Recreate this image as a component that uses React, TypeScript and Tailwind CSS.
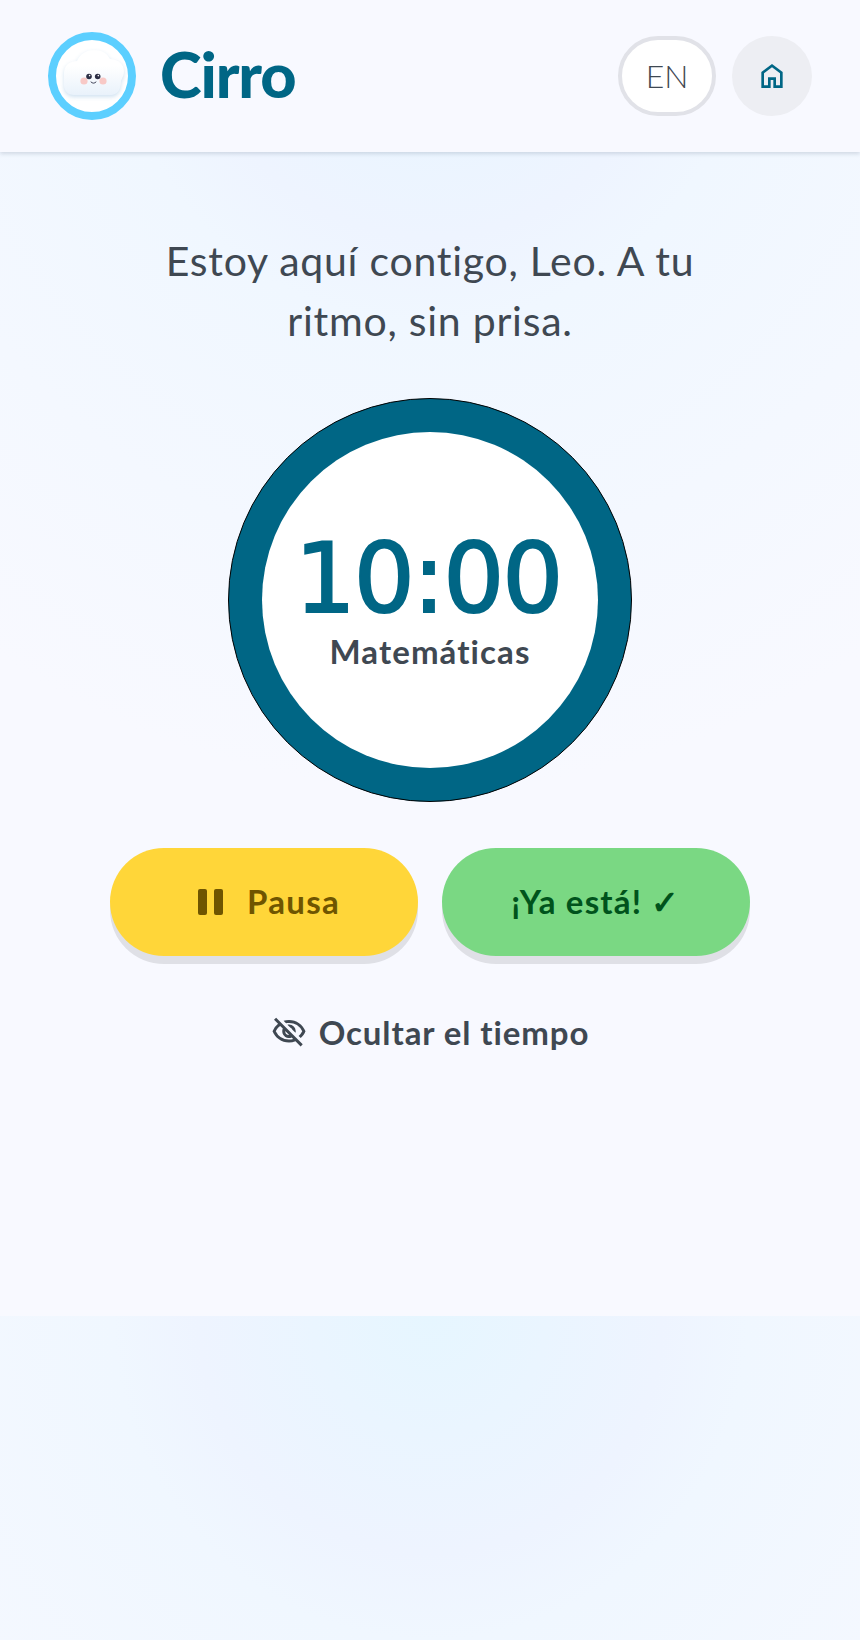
import { MdOutlineVisibilityOff } from 'react-icons/md'

// Small mascot in the header badge
function CloudLogo() {
  return (
    <div className="flex h-[88px] w-[88px] shrink-0 items-center justify-center rounded-full border-8 border-[#5ccfff] bg-white">
      <svg width="66" height="52" viewBox="-1 0 66 52" className="shrink-0 drop-shadow-[0_2px_2px_rgba(150,190,225,0.45)]">
        <defs>
          <linearGradient id="cloudFill" x1="0" y1="0" x2="0" y2="1">
            <stop offset="0.35" stopColor="#ffffff" />
            <stop offset="1" stopColor="#e9f2fb" />
          </linearGradient>
        </defs>
        <path
          d="M14 45C8 45 4 41 4 35V23C4 15 10 11 17 11C20 4 26 0 34 0C42 0 47 3 50 9C58 9 64 14 64 21C64 26 62 28 61 31C61 40 57 45 51 45Z"
          fill="url(#cloudFill)"
        />
        <circle cx="24" cy="31" r="3.6" fill="#f8c9c6" />
        <circle cx="43" cy="31" r="3.6" fill="#f8c9c6" />
        <circle cx="29" cy="26.500" r="2.8" fill="#2c2f45" />
        <circle cx="37.700" cy="26.500" r="2.8" fill="#2c2f45" />
        <circle cx="29.600" cy="25.600" r="0.8" fill="#fff" />
        <circle cx="38.300" cy="25.600" r="0.8" fill="#fff" />
        <path d="M31 32c1.500 1.600 3.500 1.600 5 0" fill="none" stroke="#2c2f45" strokeWidth="0.9" strokeLinecap="round" />
      </svg>
    </div>
  )
}

function HomeIcon() {
  return (
    <svg width="32" height="32" viewBox="0 0 24 24" fill="#006685">
      <path d="M6 19h3v-6h6v6h3v-9l-6-4.500-6 4.500zm-2 2V9l8-6 8 6v12h-7v-6h-2v6z" />
    </svg>
  )
}

function PauseIcon() {
  return (
    <div className="flex gap-[7px]">
      <span className="h-[26px] w-[9px] rounded-[2px] bg-[#6f5500]" />
      <span className="h-[26px] w-[9px] rounded-[2px] bg-[#6f5500]" />
    </div>
  )
}

export default function App() {
  return (
    <div className="min-h-[1640px] bg-[#f8f9ff] bg-[radial-gradient(ellipse_774px_790px_at_50%_0%,#e6f6ff_0%,#eef4ff_30%,#f0f7ff_41%,#f8f9ff_100%)] bg-[length:100%_1316px] font-['Lato',sans-serif]">
      <header className="flex h-[152px] items-center justify-between bg-[#f8f9ff] px-12 shadow-[0_2px_4px_rgba(40,60,90,0.16)]">
        <div className="flex items-center gap-[24px]">
          <CloudLogo />
          <span className="mb-[6px] font-['Lato',sans-serif] text-[63px] leading-none font-black tracking-[-1.1px] text-[#006685]">Cirro</span>
        </div>
        <div className="flex items-center gap-4">
          <button className="flex h-20 w-[98px] items-center justify-center rounded-full border-4 border-[#e1e2e8] bg-white text-[32px] font-light text-[#3f4852]">
            EN
          </button>
          <button className="flex h-20 w-20 items-center justify-center rounded-full bg-[#edeef3]">
            <HomeIcon />
          </button>
        </div>
      </header>

      <main className="flex h-[1164px] flex-col items-center pt-[79px]">
        <p className="w-[600px] text-center text-[41px] leading-[60px] tracking-[0.75px] text-[#3f4852]">
          Estoy aquí contigo, Leo. A tu ritmo, sin prisa.
        </p>

        <div className="mt-[47px] flex h-[404px] w-[404px] items-center justify-center rounded-full border border-black bg-[#006685]">
          <div className="flex h-[336px] w-[336px] flex-col items-center justify-center rounded-full bg-white">
            <span className="mt-[-2px] mr-[4px] font-['DejaVu_Sans',sans-serif] text-[96px] leading-[104px] tracking-[-2px] text-[#006685] [-webkit-text-stroke:2px_#006685]">10:00</span>
            <span className="text-[33px] leading-[40px] font-bold tracking-[1.1px] text-[#3f4852]">Matemáticas</span>
          </div>
        </div>

        <div className="mt-[46px] flex gap-6">
          <button className="flex h-[108px] w-[308px] items-center justify-center gap-6 rounded-full bg-[#ffd639] pl-[10px] text-[33px] font-bold tracking-[1.3px] text-[#6f5500] shadow-[0_8px_0_#dfe0e6]">
            <PauseIcon />
            Pausa
          </button>
          <button className="flex h-[108px] w-[308px] items-center justify-center rounded-full bg-[#7ad883] text-[33px] font-bold tracking-[1.2px] text-[#00531c] shadow-[0_8px_0_#dfe0e6]">
            ¡Ya está! ✓
          </button>
        </div>

        <button className="mt-[52px] flex items-center gap-[12px] text-[33px] leading-[48px] font-bold tracking-[0.9px] text-[#3f4852]">
          <MdOutlineVisibilityOff size={36} />
          Ocultar el tiempo
        </button>
      </main>
    </div>
  )
}
